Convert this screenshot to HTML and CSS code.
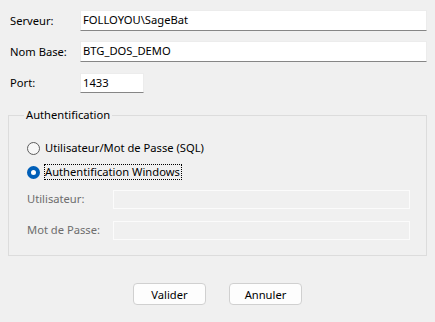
FILE: index.html
```html
<!DOCTYPE html>
<html lang="fr">
<head>
<meta charset="utf-8">
<title>Connexion</title>
<link rel="stylesheet" href="styles.css">
</head>
<body>
<div class="dialog">
  <div class="row">
    <span class="label">Serveur:</span>
    <div class="input wide">FOLLOYOU\SageBat</div>
  </div>
  <div class="row">
    <span class="label">Nom Base:</span>
    <div class="input wide">BTG_DOS_DEMO</div>
  </div>
  <div class="row">
    <span class="label">Port:</span>
    <div class="input port">1433</div>
  </div>

  <fieldset class="group">
    <legend class="caption">Authentification</legend>
    <div class="radio-row">
      <span class="radio"></span>
      <span class="radio-text">Utilisateur/Mot de Passe (SQL)</span>
    </div>
    <div class="radio-row second">
      <span class="radio checked"></span>
      <span class="radio-text focus">Authentification Windows</span>
    </div>
    <div class="field-row first">
      <span class="field-label">Utilisateur:</span>
      <div class="input disabled"></div>
    </div>
    <div class="field-row">
      <span class="field-label">Mot de Passe:</span>
      <div class="input disabled"></div>
    </div>
  </fieldset>

  <div class="buttons">
    <button class="btn">Valider</button>
    <button class="btn">Annuler</button>
  </div>
</div>
</body>
</html>
```

FILE: styles.css
```css
html, body {
  margin: 0;
  padding: 0;
  background: #f0f0f0;
}
body {
  font-family: "Noto Sans", "Open Sans", sans-serif;
  font-size: 11.2px;
  color: #000;
}
.dialog {
  width: 435px;
  height: 322px;
  box-sizing: border-box;
  padding: 10px 8px 0 0;
}
.row {
  display: flex;
  align-items: center;
  height: 21px;
  margin-bottom: 10px;
}
.label {
  width: 70px;
  padding-left: 10px;
  box-sizing: content-box;
  line-height: 16px;
}
.input {
  box-sizing: border-box;
  height: 21px;
  background: #fff;
  border: 1px solid #ececec;
  border-bottom: 1px solid #868686;
  padding: 0 2px;
  line-height: 18px;
  white-space: nowrap;
}
.input.wide {
  flex: 1;
}
.input.port {
  width: 64px;
  height: 20px;
}
.group {
  margin: 14px 0 0 8px;
  padding: 17px 16px 15px 18px;
  border: 1px solid #dcdcdc;
  border-radius: 0;
  min-width: 0;
}
.caption {
  padding: 0 2px;
  margin-left: -3px;
  line-height: 16px;
}
.radio-row {
  display: flex;
  align-items: center;
  height: 16px;
}
.radio-row.second {
  margin-top: 8px;
}
.radio {
  width: 13px;
  height: 13px;
  box-sizing: border-box;
  border-radius: 50%;
  border: 1px solid #5d5d5d;
  background: #f7f7f7;
  margin-right: 5px;
  flex: none;
}
.radio.checked {
  border: 4px solid #005fb8;
  background: #fff;
}
.radio-text {
  line-height: 14px;
  padding: 0 1px 0 0;
  margin-left: -1px;
  border: 1px dotted transparent;
}
.radio-text.focus {
  border-color: #000;
}
.field-row {
  display: flex;
  align-items: center;
  height: 20px;
  margin-top: 11px;
}
.field-row.first {
  margin-top: 9px;
}
.field-label {
  width: 86px;
  color: #6d6d6d;
  line-height: 16px;
}
.input.disabled {
  flex: 1;
  height: 19px;
  background: #f0f0f0;
  border: 1px solid #fbfbfb;
}
.buttons {
  display: flex;
  justify-content: center;
  gap: 23px;
  margin-top: 27px;
  padding-left: 8px;
}
.btn {
  width: 73px;
  height: 22px;
  box-sizing: border-box;
  background: #fdfdfd;
  border: 1px solid #d0d0d0;
  border-radius: 4px;
  font-family: inherit;
  font-size: 11.2px;
  color: #000;
  padding: 0;
}
```
